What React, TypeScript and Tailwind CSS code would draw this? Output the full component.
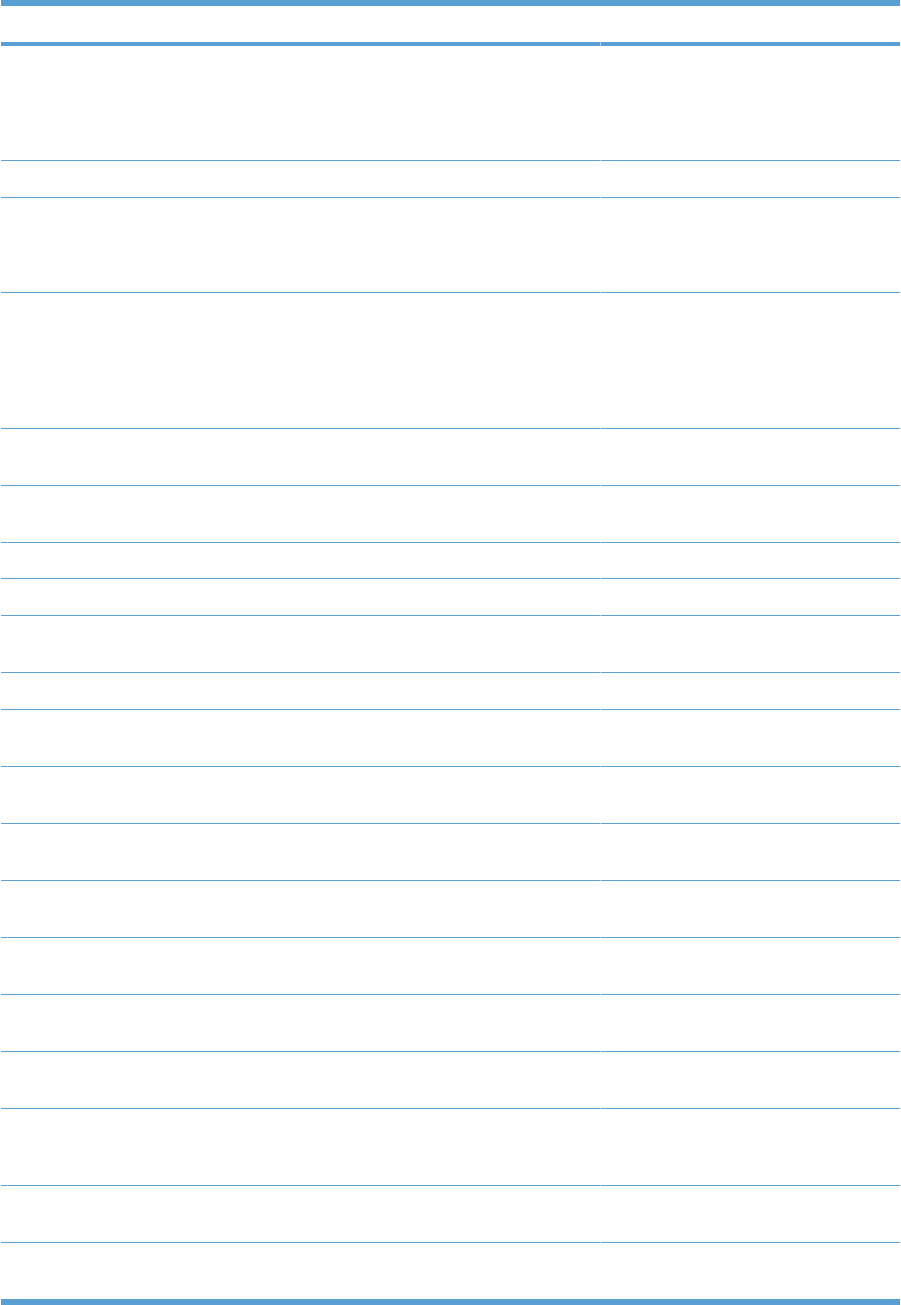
import React from "react"

// each body row, bottom rule included in the height
const rows = [
  "h-[115px] border-b",
  "h-[37px] border-b",
  "h-[95px] border-b",
  "h-[136px] border-b",
  "h-[57px] border-b",
  "h-[57px] border-b",
  "h-[36px] border-b",
  "h-[37px] border-b",
  "h-[57px] border-b",
  "h-[37px] border-b",
  "h-[57px] border-b",
  "h-[57px] border-b",
  "h-[57px] border-b",
  "h-[57px] border-b",
  "h-[57px] border-b",
  "h-[57px] border-b",
  "h-[57px] border-b",
  "h-[77px] border-b",
  "h-[57px] border-b",
  "h-[56px]",
]

export default function App() {
  return (
    <div className="min-h-screen bg-white font-['Liberation_Sans',sans-serif]">
      <div className="ml-px w-[899px]">
        <div className="h-[6px] bg-[#5a9fd4]" />
        <div className="grid grid-cols-[599px_299px] gap-x-px">
          {/* faint joint where the two column rules meet */}
          <div className="relative h-[40px] border-b-4 border-[#5a9fd4] after:absolute after:-right-px after:-bottom-1 after:h-1 after:w-px after:bg-[#acceea]" />
          <div className="h-[40px] border-b-4 border-[#5a9fd4]" />
          {rows.map((cls, i) => (
            <React.Fragment key={i}>
              <div
                className={`${cls} relative border-[#5a9fd4] ${
                  i < rows.length - 1
                    ? "after:absolute after:-right-px after:-bottom-px after:h-px after:w-px after:bg-[#acceea]"
                    : ""
                }`}
              />
              <div className={`${cls} border-[#5a9fd4]`} />
            </React.Fragment>
          ))}
        </div>
        <div className="h-[6px] bg-[#5a9fd4]" />
      </div>
    </div>
  )
}
